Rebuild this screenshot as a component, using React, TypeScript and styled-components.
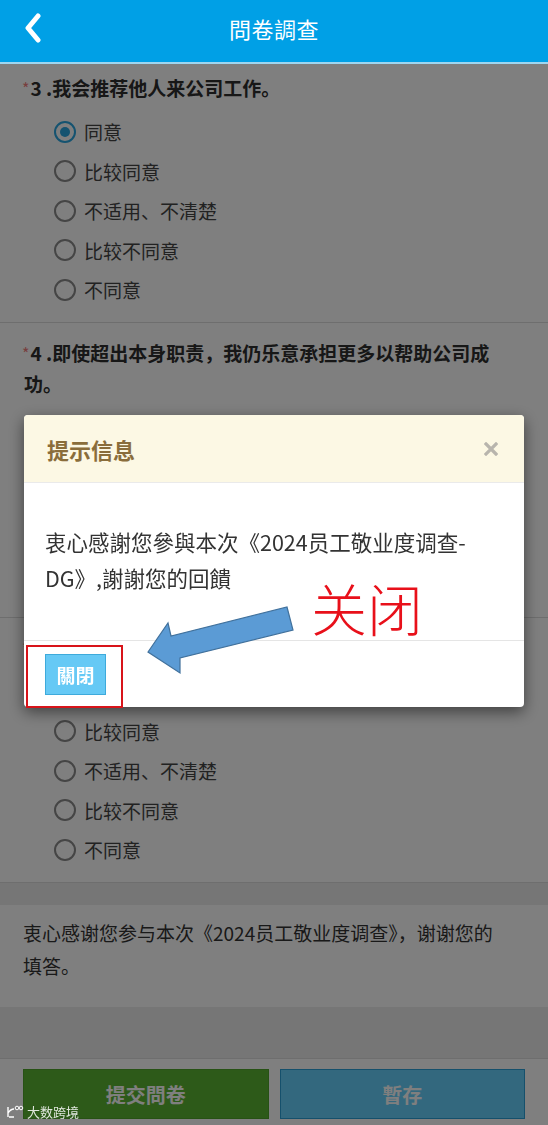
import React from "react";
import styled, { createGlobalStyle } from "styled-components";

const GlobalStyle = createGlobalStyle`
  * { box-sizing: border-box; }
  html, body { margin: 0; padding: 0; }
  body {
    font-family: "Noto Sans CJK SC", "Noto Sans", sans-serif;
    background: #ececec;
    width: 548px;
    overflow: hidden;
  }
`;

const Page = styled.div`
  width: 548px;
  height: 1125px;
  display: flex;
  flex-direction: column;
  background: #ececec;
  overflow: hidden;
`;

const Header = styled.header`
  position: relative;
  z-index: 3;
  flex: none;
  height: 64px;
  background: #00a0e6;
  border-bottom: 2px solid #9fd6f0;
  display: grid;
  grid-template-columns: 70px 1fr 70px;
  align-items: center;
  padding-bottom: 6px;
`;

const BackButton = styled.button`
  justify-self: start;
  margin-left: 22px;
  width: 22px;
  height: 32px;
  padding: 0;
  border: 0;
  background: none;
  display: flex;
  align-items: center;
  justify-content: center;
`;

const HeaderTitle = styled.h1`
  margin: 0;
  text-align: center;
  color: #fff;
  font-size: 22px;
  line-height: 30px;
  font-weight: 400;
  letter-spacing: 0.5px;
`;

const Question = styled.section`
  flex: none;
  background: #fff;
  padding: 14px 24px 12px;
  border-bottom: 1px solid #dcdcdc;
  &:nth-of-type(1) {
    padding-top: 8px;
  }
`;

const QuestionTitle = styled.h2`
  margin: 0 0 9px;
  font-size: 19px;
  line-height: 31px;
  font-weight: 700;
  color: #2e2e2e;
`;

const Star = styled.span`
  display: inline-block;
  vertical-align: top;
  margin: 8px 1px 0 -2px;
  height: 14px;
  font-size: 16px;
  line-height: 16px;
  font-weight: 400;
  color: #f07c7c;
`;

const OptionList = styled.ul`
  list-style: none;
  margin: 0;
  padding: 0 0 0 30px;
`;

const Option = styled.li`
  height: 39.5px;
  display: flex;
  align-items: center;
  gap: 8px;
  font-size: 19px;
  color: #444;
`;

const Radio = styled.span<{ $checked?: boolean }>`
  position: relative;
  flex: none;
  width: 22px;
  height: 22px;
  border-radius: 50%;
  border: 2px solid ${(p) => (p.$checked ? "#2aa6e0" : "#8a8a8a")};
  &::after {
    content: "";
    display: ${(p) => (p.$checked ? "block" : "none")};
    position: absolute;
    left: 4px;
    top: 4px;
    width: 10px;
    height: 10px;
    border-radius: 50%;
    background: #2aa6e0;
  }
`;

const Gap = styled.div`
  flex: none;
  height: 22px;
`;

const ThanksPanel = styled.p`
  flex: none;
  margin: 0;
  background: #fff;
  padding: 11.5px 42px 24.5px 23px;
  font-size: 19px;
  line-height: 33px;
  color: #333;
`;

const Filler = styled.div`
  flex: 1;
`;

const Footer = styled.footer`
  flex: none;
  background: #fff;
  border-top: 1px solid #dcdcdc;
  padding: 10px 23px 6px;
  display: grid;
  grid-template-columns: 1fr 1fr;
  gap: 11px;
`;

const FooterButton = styled.button<{ $tone: "green" | "blue" }>`
  height: 50px;
  border: 1px solid ${(p) => (p.$tone === "green" ? "#4fa52a" : "#2aa0d8")};
  background: ${(p) => (p.$tone === "green" ? "#5ab432" : "#66d0fc")};
  color: #fff;
  font-family: inherit;
  font-size: 20px;
  font-weight: 700;
  padding: 0;
`;

const Overlay = styled.div`
  position: fixed;
  inset: 0;
  z-index: 2;
  background: rgba(0, 0, 0, 0.5);
  display: flex;
  align-items: center;
  justify-content: center;
  padding-bottom: 3px;
`;

const Modal = styled.div`
  position: relative;
  width: 500px;
  background: #fff;
  border-radius: 4px;
  box-shadow: 0 5px 15px rgba(0, 0, 0, 0.5);
`;

const ModalHeader = styled.div`
  height: 68px;
  padding: 0 23px;
  background: #fcf8e4;
  border-bottom: 1px solid #eaeaea;
  border-radius: 4px 4px 0 0;
  display: flex;
  align-items: center;
  justify-content: space-between;
`;

const ModalTitle = styled.h3`
  margin: 0;
  font-size: 22px;
  font-weight: 700;
  color: #8a6d3b;
`;

const CloseButton = styled.button`
  width: 16px;
  height: 16px;
  margin-right: 2px;
  padding: 0;
  border: 0;
  background: none;
  display: flex;
  align-items: center;
  justify-content: center;
`;

const ModalBody = styled.div`
  padding: 41px 21px 44px;
  font-size: 21.5px;
  line-height: 36px;
  color: #333;
`;

const ModalFooter = styled.div`
  border-top: 1px solid #e5e5e5;
  padding: 13px 21px 12px;
  display: flex;
`;

const CloseAction = styled.button`
  width: 61px;
  height: 41px;
  padding: 0;
  background: #66c9f5;
  border: 1px solid #3eaadb;
  color: #fff;
  font-family: inherit;
  font-size: 19px;
  font-weight: 700;
`;

const MarkBox = styled.div`
  position: absolute;
  left: 2px;
  top: 230px;
  width: 97px;
  height: 63px;
  border: 2px solid #d8141a;
  pointer-events: none;
`;

const MarkLabel = styled.div`
  position: absolute;
  left: 287px;
  top: 164px;
  font-size: 56px;
  line-height: 56px;
  font-weight: 300;
  color: #e8101a;
  pointer-events: none;
`;

const MarkArrow = styled.svg`
  position: absolute;
  left: 0;
  top: 0;
  pointer-events: none;
`;

const Watermark = styled.div`
  position: fixed;
  left: 6px;
  bottom: 4px;
  z-index: 5;
  display: flex;
  align-items: center;
  gap: 3px;
  font-size: 13px;
  color: rgba(255, 255, 255, 0.85);
`;

const options = ["同意", "比较同意", "不适用、不清楚", "比较不同意", "不同意"];

const questions = [
  { no: 3, text: "我会推荐他人来公司工作。", checked: 0 },
  { no: 4, text: "即使超出本身职责，我仍乐意承担更多以帮助公司成功。", checked: -1 },
  { no: 5, text: "我为在公司工作感到自豪。", checked: -1 },
];

export default function App() {
  return (
    <>
      <GlobalStyle />
      <Page>
        <Header>
          <BackButton aria-label="返回">
            <svg width="20" height="30" viewBox="0 0 20 30">
              <polyline
                points="15,3 5,15 15,27"
                fill="none"
                stroke="#fff"
                strokeWidth="5"
                strokeLinecap="round"
                strokeLinejoin="round"
              />
            </svg>
          </BackButton>
          <HeaderTitle>問卷調查</HeaderTitle>
          <span />
        </Header>

        {questions.map((q) => (
          <Question key={q.no}>
            <QuestionTitle>
              <Star>*</Star>
              {q.no} .{q.text}
            </QuestionTitle>
            <OptionList>
              {options.map((o, i) => (
                <Option key={o}>
                  <Radio $checked={q.checked === i} />
                  {o}
                </Option>
              ))}
            </OptionList>
          </Question>
        ))}

        <Gap />
        <ThanksPanel>衷心感谢您参与本次《2024员工敬业度调查》，谢谢您的填答。</ThanksPanel>
        <Filler />
        <Footer>
          <FooterButton $tone="green">提交問卷</FooterButton>
          <FooterButton $tone="blue">暫存</FooterButton>
        </Footer>
      </Page>

      <Overlay>
        <Modal>
          <ModalHeader>
            <ModalTitle>提示信息</ModalTitle>
            <CloseButton aria-label="關閉">
              <svg width="14" height="14" viewBox="0 0 14 14">
                <path d="M2 2L12 12M12 2L2 12" stroke="#b8b5ad" strokeWidth="3.2" strokeLinecap="square" />
              </svg>
            </CloseButton>
          </ModalHeader>
          <ModalBody>衷心感謝您參與本次《2024员工敬业度调查-DG》,謝謝您的回饋</ModalBody>
          <ModalFooter>
            <CloseAction>關閉</CloseAction>
          </ModalFooter>
          <MarkBox />
          <MarkLabel>关闭</MarkLabel>
          <MarkArrow width="500" height="292" viewBox="0 0 500 292">
            <polygon
              points="124,237 144,208 147,221 263,192 269,215 156,243 156,258"
              fill="#5b9bd5"
              stroke="#41719c"
              strokeWidth="1.2"
              strokeLinejoin="miter"
            />
          </MarkArrow>
        </Modal>
      </Overlay>

      <Watermark>
        <svg width="18" height="14" viewBox="0 0 18 14">
          <path d="M2 2v10M2 8c2-3 4-4 6-4M3 12h5" stroke="#fff" strokeWidth="1.4" fill="none" />
          <circle cx="11" cy="3" r="1.8" stroke="#fff" strokeWidth="1" fill="none" />
          <circle cx="15" cy="3" r="1.8" stroke="#fff" strokeWidth="1" fill="none" />
        </svg>
        大数跨境
      </Watermark>
    </>
  );
}
